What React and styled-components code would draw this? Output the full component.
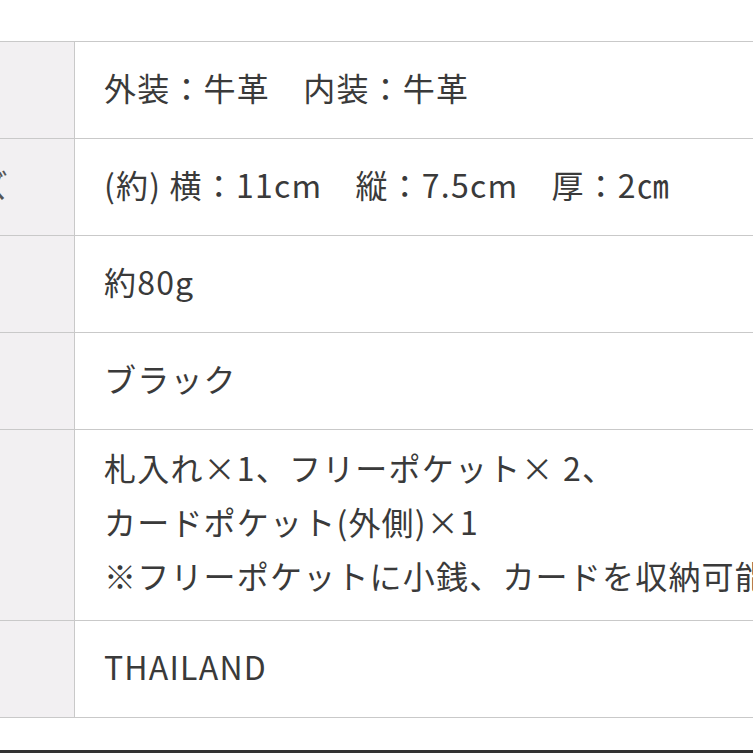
import React from 'react';
import styled, { createGlobalStyle } from 'styled-components';

const GlobalStyle = createGlobalStyle`
  html, body { margin: 0; padding: 0; background: #fff; overflow: hidden; }
  body {
    width: 753px; height: 753px;
    font-family: "Noto Sans CJK JP", "Noto Sans", sans-serif;
    color: #3a3a3a;
  }
`;

const rows = [
  { label: '', lines: ['外装：牛革　内装：牛革'] },
  { label: 'サイズ', lines: ['(約) 横：11cm　縦：7.5cm　厚：2㎝'] },
  { label: '', lines: ['約80g'] },
  { label: '', lines: ['ブラック'] },
  {
    label: '',
    lines: [
      '札入れ×1、フリーポケット× 2、',
      'カードポケット(外側)×1',
      '※フリーポケットに小銭、カードを収納可能',
    ],
  },
  { label: '', lines: ['THAILAND'] },
];

export default function App() {
  return (
    <>
      <GlobalStyle />
      <Page>
        <Table>
          {rows.map((r, i) => (
            <Row key={i}>
              <Head>{r.label && <HeadText>{r.label}</HeadText>}</Head>
              <Cell multi={r.lines.length > 1}>
                {r.lines.map((l, j) => (
                  <Line key={j}>{l}</Line>
                ))}
              </Cell>
            </Row>
          ))}
        </Table>
        <BottomBar />
      </Page>
    </>
  );
}

const Page = styled.div`
  width: 753px;
  height: 753px;
  display: flex;
  flex-direction: column;
  padding-top: 41px;
  box-sizing: border-box;
  overflow: hidden;
`;

const Table = styled.div`
  width: 900px;
  border-top: 1px solid #c9c9c9;
  display: flex;
  flex-direction: column;
`;

const Row = styled.div`
  display: grid;
  grid-template-columns: 75px 1fr;
  border-bottom: 1px solid #c9c9c9;
`;

const Head = styled.div`
  background: #f2f0f2;
  border-right: 1px solid #c9c9c9;
  display: flex;
  justify-content: flex-end;
  align-items: center;
  padding-right: 66px;
  padding-bottom: 6px;
  overflow: hidden;
  font-size: 32px;
  color: #555;
`;

const HeadText = styled.span`
  white-space: nowrap;
  flex-shrink: 0;
`;

const Cell = styled.div`
  display: flex;
  flex-direction: column;
  justify-content: center;
  padding: ${({ multi }) => (multi ? '10px 0 18px 29px' : '0 0 6px 29px')};
  min-height: 96px;
  box-sizing: border-box;
  background: #fff;
`;

const Line = styled.div`
  font-size: 32px;
  line-height: 54px;
  white-space: nowrap;
  letter-spacing: 1.2px;
`;

const BottomBar = styled.div`
  margin-top: auto;
  height: 3px;
  background: #333;
  flex-shrink: 0;
`;
